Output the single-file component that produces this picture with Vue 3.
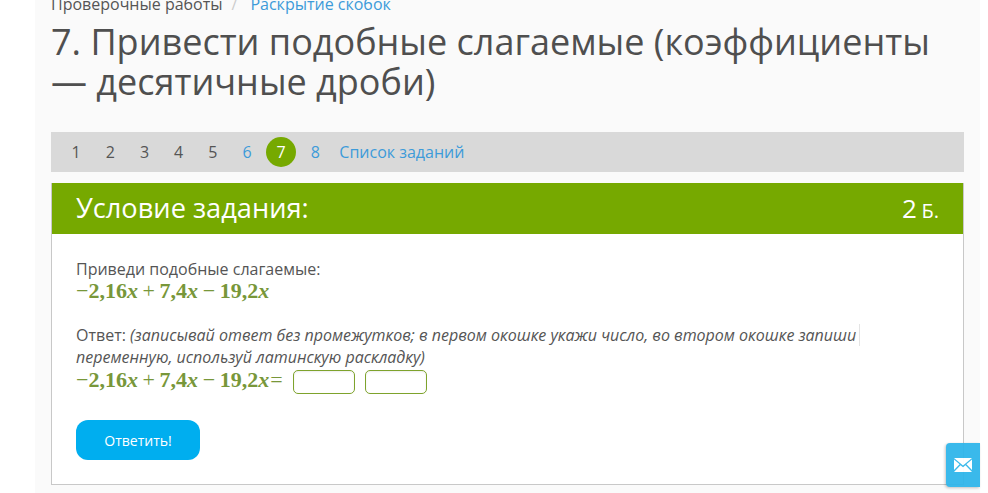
<script setup>
import { ref } from "vue";

const tasks = ref([
    { n: 1, state: "done" },
    { n: 2, state: "done" },
    { n: 3, state: "done" },
    { n: 4, state: "done" },
    { n: 5, state: "done" },
    { n: 6, state: "link" },
    { n: 7, state: "current" },
    { n: 8, state: "link" },
]);
</script>

<template>
    <div class="page">
        <div class="content">
            <div class="crumbs">
                <span>Проверочные работы</span>
                <span class="sep">/</span>
                <a class="link">Раскрытие скобок</a>
            </div>

            <h1 class="title">7. Привести подобные слагаемые (коэффициенты — десятичные дроби)</h1>

            <nav class="task-nav">
                <span
                    v-for="t in tasks"
                    :key="t.n"
                    class="task-num"
                    :class="t.state"
                >{{ t.n }}</span>
                <a class="link task-list">Список заданий</a>
            </nav>

            <section class="panel">
                <header class="panel-head">
                    <span class="panel-title">Условие задания:</span>
                    <span class="points">2 <small>Б.</small></span>
                </header>

                <div class="panel-body">
                    <div class="text">Приведи подобные слагаемые:</div>
                    <div class="math"><span class="op first">−</span>2,16<i>x</i><span class="op">+</span>7,4<i>x</i><span class="op">−</span>19,2<i>x</i></div>

                    <div class="text answer">
                        Ответ: <em class="hint">(записывай ответ без промежутков; в первом окошке укажи число, во втором окошке запиши <span class="caret"></span>переменную, используй латинскую раскладку)</em>
                    </div>
                    <div class="answer-row">
                        <div class="math"><span class="op first">−</span>2,16<i>x</i><span class="op">+</span>7,4<i>x</i><span class="op">−</span>19,2<i>x</i><span class="eq">=</span></div>
                        <input class="box" type="text" />
                        <input class="box" type="text" />
                    </div>

                    <button class="submit" type="button">Ответить!</button>
                </div>
            </section>
        </div>

        <button class="mail" type="button" aria-label="Написать">
            <svg width="18" height="14" viewBox="0 0 18 14">
                <path d="M0 0h18L9 7.6z" fill="#fff" />
                <path d="M0 1.6 5.6 6.3 0 12zM18 1.6 12.4 6.3 18 12z" fill="#fff" />
                <path d="M0 14 6.5 7.2 9 9.3l2.5-2.1L18 14z" fill="#fff" />
            </svg>
        </button>
    </div>
</template>

<style>
html,
body {
    margin: 0;
    background: #fff;
    overflow: hidden;
}
</style>

<style scoped>
.page {
    width: 945px;
    height: 493px;
    margin-left: 35px;
    background: #fafafa;
    font-family: "Open Sans", "Liberation Sans", sans-serif;
    color: #555;
    overflow: hidden;
}

.content {
    padding: 0 16px;
    margin-top: -7px;
}

.crumbs {
    font-size: 16px;
    line-height: 22px;
    height: 22px;
    display: flex;
    color: #555;
}

.sep {
    color: #ccc;
    margin: 0 13px 0 9px;
}

.link {
    color: #3d9bd9;
}

.title {
    margin: 7px 0 0;
    font-size: 36px;
    line-height: 40px;
    font-weight: 400;
    color: #4f4f4f;
}

.task-nav {
    margin-top: 30px;
    height: 40px;
    background: #d9d9d9;
    display: flex;
    align-items: center;
    padding-left: 8px;
    font-size: 16px;
}

.task-num {
    width: 34.2px;
    text-align: center;
    color: #555;
}

.task-num.link {
    color: #3d9bd9;
}

.task-num.current {
    width: 30px;
    height: 30px;
    margin: 0 2px;
    line-height: 30px;
    border-radius: 50%;
    background: #76a900;
    color: #fff;
}

.task-list {
    margin-left: 7px;
}

.panel {
    margin-top: 11px;
    height: 302px;
    box-sizing: border-box;
    border: 1px solid #c8c8c8;
    border-top: 0;
    background: #fff;
}

.panel-head {
    height: 51px;
    padding: 0 24px 2px 24px;
    box-sizing: border-box;
    background: #76a900;
    color: #fff;
    display: flex;
    align-items: center;
    justify-content: space-between;
}

.panel-title {
    font-size: 27.2px;
}

.points {
    font-size: 26px;
    word-spacing: -2px;
}

.points small {
    font-size: 20px;
}

.panel-body {
    padding: 24px 24px 0;
}

.text {
    font-size: 16px;
    line-height: 22px;
    color: #555;
}

.math {
    font-family: "Liberation Serif", "DejaVu Serif", serif;
    font-size: 22px;
    font-weight: 700;
    line-height: 22px;
    color: #78973a;
    white-space: nowrap;
}

.math i {
    font-style: italic;
}

.op {
    font-weight: 400;
    margin: 0 4.6px;
}

.op.first {
    margin: 0;
}

.eq {
    font-weight: 400;
    margin-left: 1px;
    margin-right: 1px;
}

.answer {
    margin-top: 22px;
}

.hint {
    font-style: italic;
}

.caret {
    display: inline-block;
    width: 0;
    height: 22px;
    border-left: 1px solid #e4e4e4;
    margin-left: -1px;
    vertical-align: top;
}

.answer-row {
    display: flex;
    align-items: flex-start;
    gap: 9px;
    height: 26px;
    padding-top: 1px;
}

.box {
    width: 62px;
    height: 24px;
    margin-top: 1px;
    box-sizing: border-box;
    border: 1px solid #7ea32c;
    border-radius: 5px;
    background: #fff;
    box-shadow: inset 0 1px 2px rgba(0, 0, 0, 0.08);
    padding: 0;
}

.box + .box {
    margin-left: 1px;
}

.submit {
    display: block;
    margin-top: 25px;
    width: 124px;
    height: 40px;
    border: 0;
    border-radius: 12px;
    background: #00aeef;
    color: #fff;
    font-family: inherit;
    font-size: 14px;
}

.mail {
    position: fixed;
    left: 946px;
    top: 443px;
    width: 34px;
    height: 44px;
    border: 0;
    padding: 0;
    border-radius: 4px 0 0 4px;
    background: #30b6ea;
    opacity: 0.95;
    box-shadow: -1px 1px 3px rgba(0, 0, 0, 0.25);
    display: flex;
    align-items: center;
    justify-content: center;
}
</style>
